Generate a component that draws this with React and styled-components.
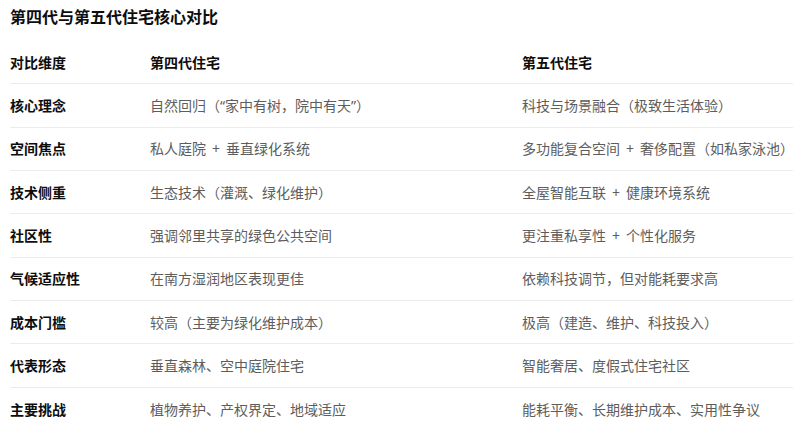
import React from 'react'
import styled, { createGlobalStyle } from 'styled-components'

const rows = [
    ['核心理念', '自然回归（“家中有树，院中有天”）', '科技与场景融合（极致生活体验）'],
    ['空间焦点', '私人庭院 + 垂直绿化系统', '多功能复合空间 + 奢侈配置（如私家泳池）'],
    ['技术侧重', '生态技术（灌溉、绿化维护）', '全屋智能互联 + 健康环境系统'],
    ['社区性', '强调邻里共享的绿色公共空间', '更注重私享性 + 个性化服务'],
    ['气候适应性', '在南方湿润地区表现更佳', '依赖科技调节，但对能耗要求高'],
    ['成本门槛', '较高（主要为绿化维护成本）', '极高（建造、维护、科技投入）'],
    ['代表形态', '垂直森林、空中庭院住宅', '智能奢居、度假式住宅社区'],
    ['主要挑战', '植物养护、产权界定、地域适应', '能耗平衡、长期维护成本、实用性争议'],
]

// 把 " + " 拆出来，单独给加号留出间距
const renderText = (text) =>
    text.split(' + ').map((part, i) => (
        <React.Fragment key={i}>
            {i > 0 && <Plus>+</Plus>}
            {part}
        </React.Fragment>
    ))

function App() {
    return (
        <>
            <GlobalStyle />
            <Page>
                <Title>第四代与第五代住宅核心对比</Title>
                <Table>
                    <Row>
                        <Cell strong>对比维度</Cell>
                        <Cell strong>第四代住宅</Cell>
                        <Cell strong>第五代住宅</Cell>
                    </Row>
                    {rows.map((r, i) => (
                        <Row key={r[0]} last={i === rows.length - 1}>
                            <Cell strong>{r[0]}</Cell>
                            <Cell>{renderText(r[1])}</Cell>
                            <Cell>{renderText(r[2])}</Cell>
                        </Row>
                    ))}
                </Table>
            </Page>
        </>
    )
}

export default App

const GlobalStyle = createGlobalStyle`
    html, body {
        margin: 0;
        padding: 0;
        background: #fff;
    }
    body {
        font-family: "Noto Sans", "Noto Sans CJK SC", sans-serif;
        color: #0d0d0d;
    }
`
const Page = styled.div`
    width: 793px;
    height: 431px;
    overflow: hidden;
    padding: 5px 0 0 10px;
    box-sizing: border-box;
`
const Title = styled.h3`
    margin: 0 0 12px;
    font-size: 16px;
    line-height: 24px;
    font-weight: 700;
    color: #0d0d0d;
`
const Table = styled.div`
    display: flex;
    flex-direction: column;
`
const Row = styled.div`
    display: grid;
    grid-template-columns: 140px 372px 1fr;
    align-items: center;
    height: 43.33px;
    box-sizing: border-box;
    border-bottom: ${(p) => (p.last ? 'none' : '1px solid #ececec')};
`
const Cell = styled.div`
    font-size: 14px;
    line-height: 21px;
    font-weight: ${(p) => (p.strong ? 700 : 400)};
    color: ${(p) => (p.strong ? '#0d0d0d' : '#5d5d5d')};
    white-space: nowrap;
`
const Plus = styled.span`
    margin: 0 6px;
`
